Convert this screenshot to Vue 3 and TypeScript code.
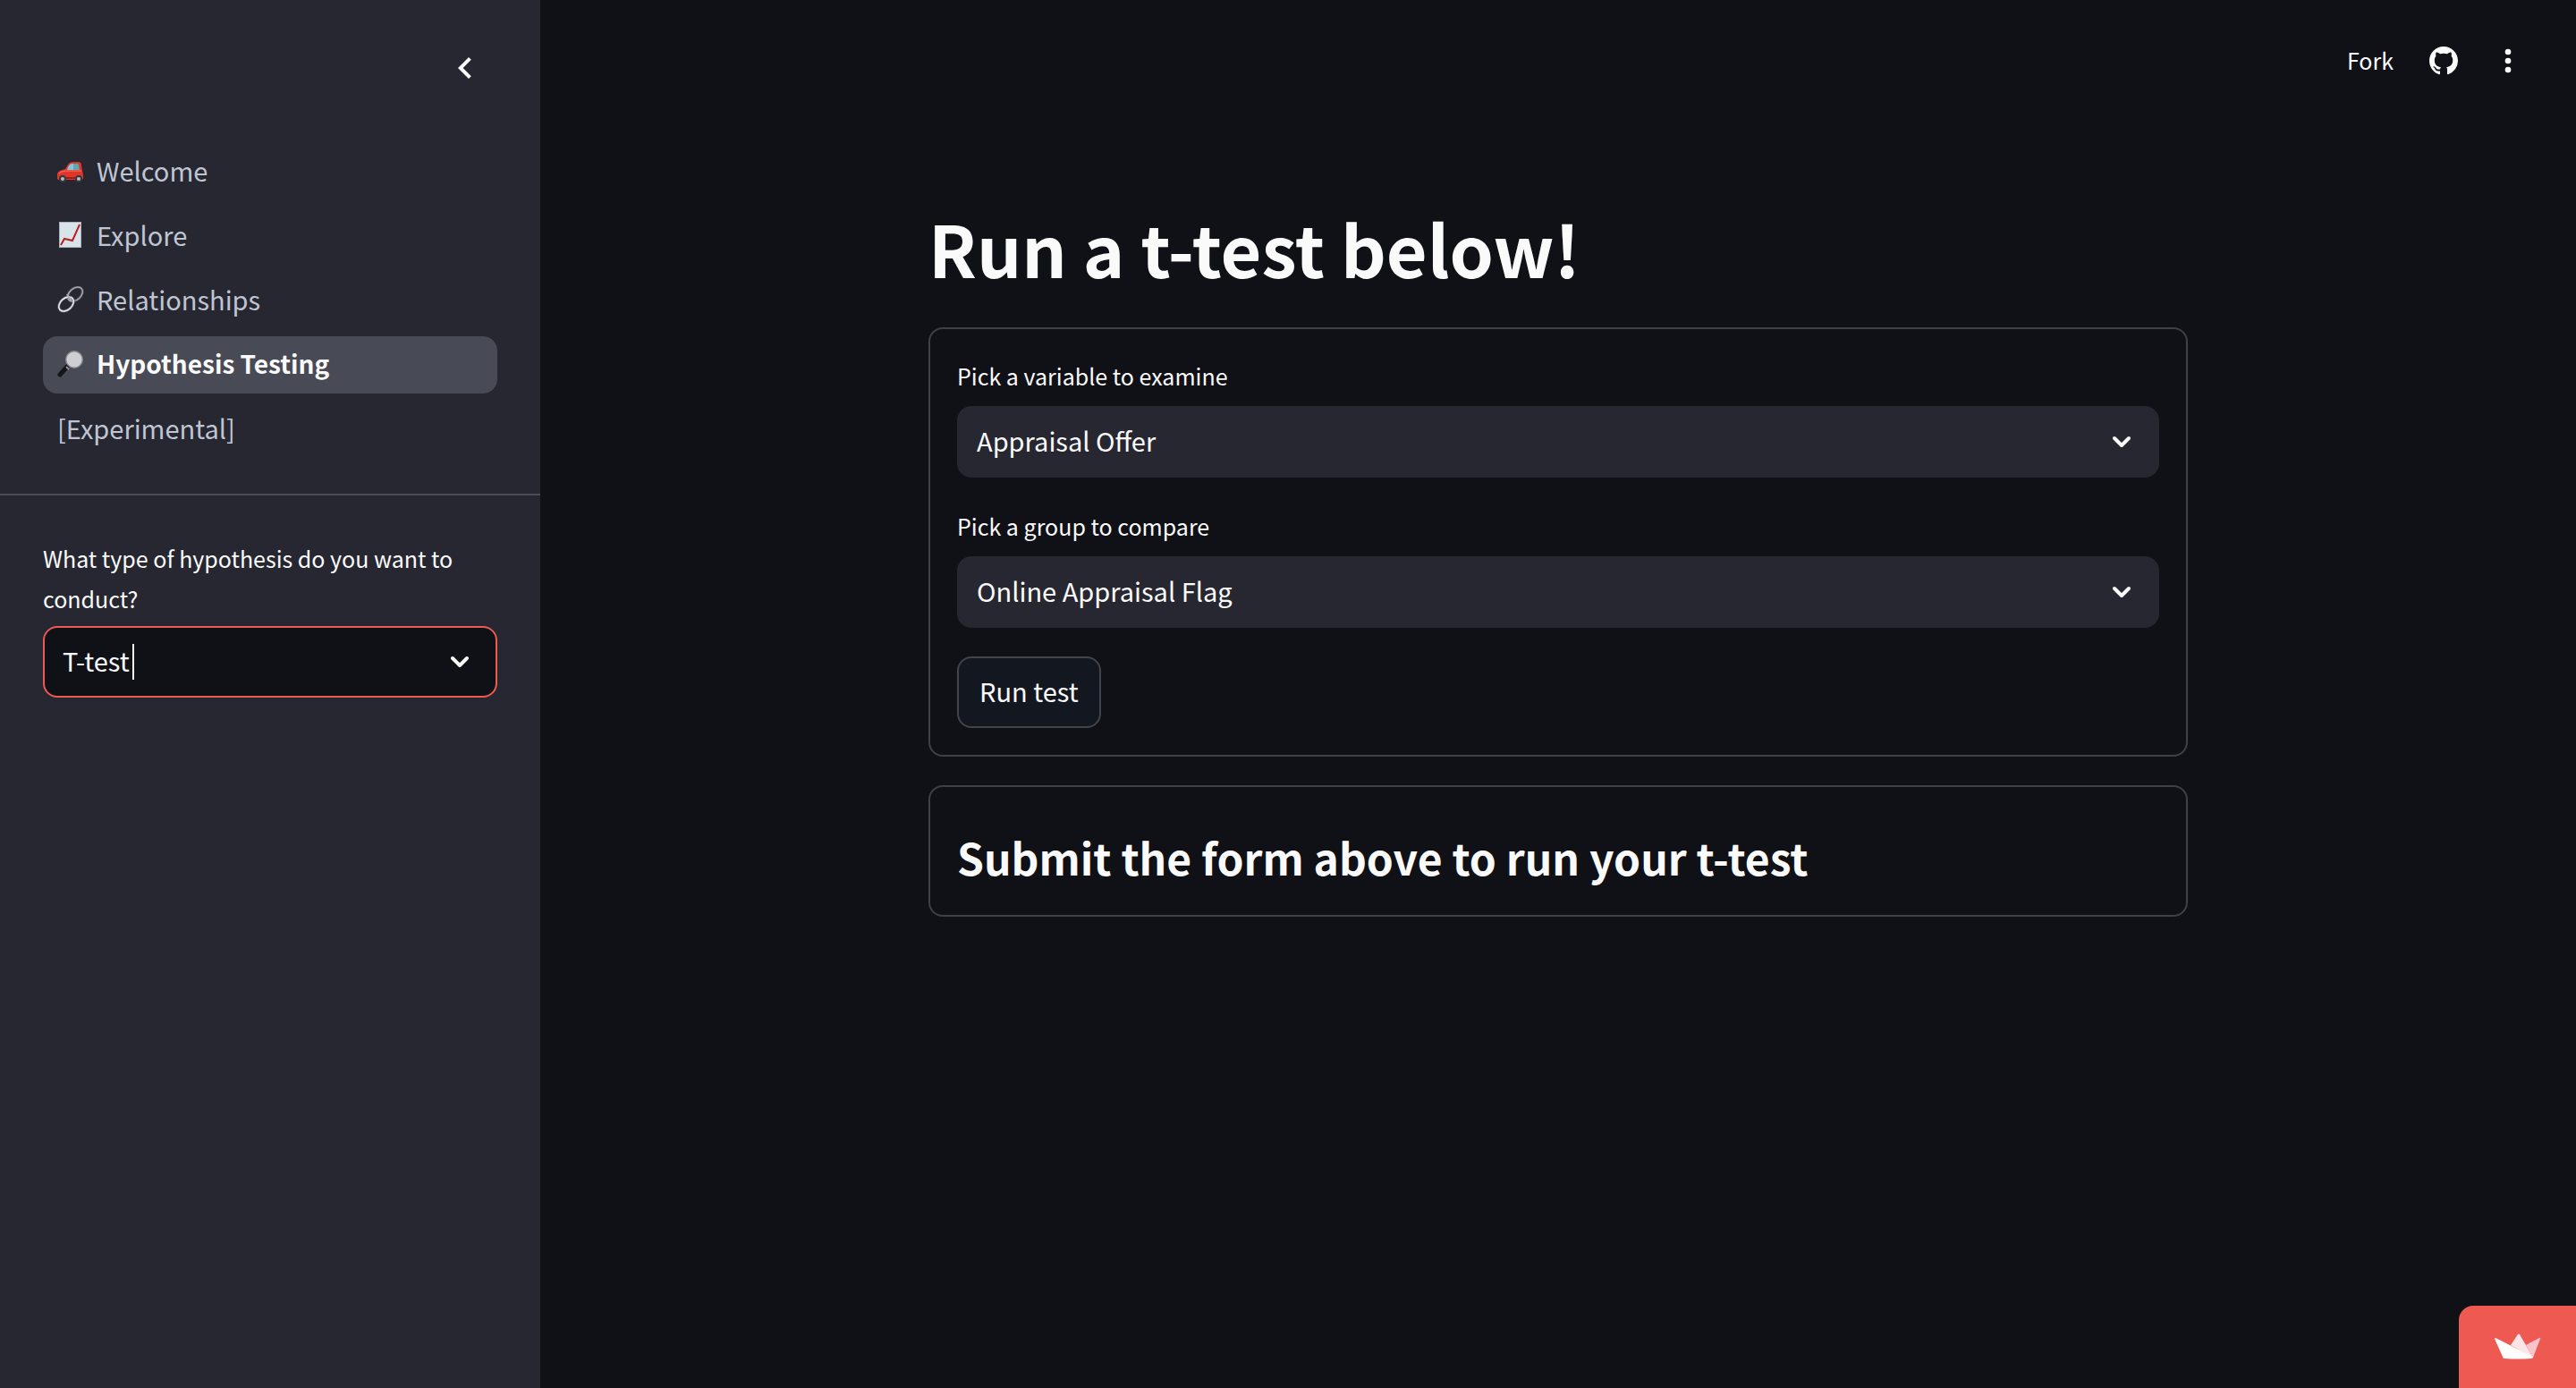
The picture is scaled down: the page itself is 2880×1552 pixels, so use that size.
<script setup lang="ts">
import { ref } from 'vue'

type Icon = 'car' | 'chart' | 'link' | 'lens' | null

interface Page {
  label: string
  icon: Icon
}

const pages: Page[] = [
  { label: 'Welcome', icon: 'car' },
  { label: 'Explore', icon: 'chart' },
  { label: 'Relationships', icon: 'link' },
  { label: 'Hypothesis Testing', icon: 'lens' },
  { label: '[Experimental]', icon: null },
]

const current = ref('Hypothesis Testing')
const hypothesis = ref('T-test')
const variable = ref('Appraisal Offer')
const group = ref('Online Appraisal Flag')
</script>

<template>
  <div class="app">
    <aside class="sidebar">
      <div class="sidebar-top">
        <button class="icon-button collapse" type="button" aria-label="Close sidebar">
          <svg width="48" height="48" viewBox="0 0 24 24"><path fill="currentColor" d="M15.41 7.41 14 6l-6 6 6 6 1.41-1.41L10.83 12z" /></svg>
        </button>
      </div>
      <nav class="pages">
        <a
          v-for="page in pages"
          :key="page.label"
          href="#"
          class="page"
          :class="{ active: page.label === current }"
          @click.prevent="current = page.label"
        >
          <svg v-if="page.icon === 'car'" class="page-icon" viewBox="0 0 30 32">
            <path d="M0 24v-5c0-3 4-5 9-6l3-5c1-2 3-3 6-3h5c3 0 4 1 4 4l1 6c1 3 1 6 1 9l-2 1H1z" fill="#e0352b" />
            <path d="M11 14c1-4 3-7 6-7h1v7z" fill="#86c6d4" />
            <path d="M18 7h5c1 0 1 2 2 7h-7z" fill="#5fa6b8" />
            <path d="M2 18c3-3 8-3 11-3h14" stroke="#ff7765" stroke-width="1" fill="none" />
            <path d="M10 23h10" stroke="#9c1a18" stroke-width="2" />
            <circle cx="6" cy="24" r="4" fill="#37373b" /><circle cx="6" cy="24" r="2" fill="#b9bcc0" />
            <circle cx="24" cy="24" r="4" fill="#37373b" /><circle cx="24" cy="24" r="2" fill="#b9bcc0" />
          </svg>
          <svg v-else-if="page.icon === 'chart'" class="page-icon" viewBox="0 0 30 32">
            <rect x="2" y="0" width="25" height="29" fill="#a9b4bd" />
            <rect x="3" y="1" width="23" height="27" fill="#d9e3ea" />
            <path d="M4 26l4-7 9 2 8-18" fill="none" stroke="#b8211f" stroke-width="2" />
          </svg>
          <svg v-else-if="page.icon === 'link'" class="page-icon" viewBox="0 0 30 32" fill="none">
            <ellipse cx="20" cy="9" rx="9.5" ry="6.5" transform="rotate(-42 20 9)" stroke="#4d4f55" stroke-width="3" />
            <ellipse cx="20" cy="9" rx="9.5" ry="6.5" transform="rotate(-42 20 9)" stroke="#a9adb6" stroke-width="1.4" />
            <ellipse cx="10" cy="20" rx="9.5" ry="6.5" transform="rotate(-42 10 20)" stroke="#5d6066" stroke-width="3" />
            <ellipse cx="10" cy="20" rx="9.5" ry="6.5" transform="rotate(-42 10 20)" stroke="#e6eaee" stroke-width="1.6" />
            <path d="M11 9c1 3 3 5 5 7" stroke="#a9adb6" stroke-width="2" />
          </svg>
          <svg v-else-if="page.icon === 'lens'" class="page-icon" viewBox="0 0 30 32">
            <path d="M3 27l8-9" stroke="#15161a" stroke-width="5" stroke-linecap="round" />
            <path d="M10 18l3 3" stroke="#8f9299" stroke-width="2" />
            <circle cx="19" cy="10" r="10" fill="#8a8c93" />
            <circle cx="19" cy="10" r="8.6" fill="#cfcfd3" />
          </svg>
          <span class="page-label">{{ page.label }}</span>
        </a>
      </nav>
      <div class="sidebar-form">
        <label class="label" for="hypothesis">What type of hypothesis do you want to conduct?</label>
        <div class="select focused">
          <select id="hypothesis" v-model="hypothesis">
            <option>T-test</option>
          </select>
          <span class="value" aria-hidden="true"><span class="ghost">{{ hypothesis }}</span><i class="caret"></i></span>
          <svg class="chevron" viewBox="0 0 24 14"><path d="M4 3l8 8 8-8" /></svg>
        </div>
      </div>
    </aside>

    <main class="main">
      <header class="toolbar">
        <a class="fork" href="#">Fork</a>
        <a class="github" href="#" aria-label="View source on GitHub">
          <svg width="32" height="32" viewBox="0 0 16 16"><path fill="currentColor" d="M8 0C3.58 0 0 3.58 0 8c0 3.54 2.29 6.53 5.47 7.59.4.07.55-.17.55-.38 0-.19-.01-.82-.01-1.49-2.01.37-2.53-.49-2.69-.94-.09-.23-.48-.94-.82-1.13-.28-.15-.68-.52-.01-.53.63-.01 1.08.58 1.23.82.72 1.21 1.87.87 2.33.66.07-.52.28-.87.51-1.07-1.78-.2-3.64-.89-3.64-3.95 0-.87.31-1.59.82-2.15-.08-.2-.36-1.02.08-2.12 0 0 .67-.21 2.2.82.64-.18 1.32-.27 2-.27s1.36.09 2 .27c1.53-1.04 2.2-.82 2.2-.82.44 1.1.16 1.92.08 2.12.51.56.82 1.27.82 2.15 0 3.07-1.87 3.75-3.65 3.95.29.25.54.73.54 1.48 0 1.07-.01 1.93-.01 2.2 0 .21.15.46.55.38A8.01 8.01 0 0 0 16 8c0-4.42-3.58-8-8-8z" /></svg>
        </a>
        <button class="icon-button" type="button" aria-label="Main menu">
          <svg width="40" height="40" viewBox="0 0 24 24" fill="currentColor"><circle cx="12" cy="6" r="2" /><circle cx="12" cy="12" r="2" /><circle cx="12" cy="18" r="2" /></svg>
        </button>
      </header>

      <div class="content">
        <h1>Run a t-test below!</h1>
        <form class="card" @submit.prevent>
          <div class="field">
            <label class="label" for="variable">Pick a variable to examine</label>
            <div class="select">
              <select id="variable" v-model="variable">
                <option>Appraisal Offer</option>
              </select>
              <svg class="chevron" viewBox="0 0 24 14"><path d="M4 3l8 8 8-8" /></svg>
            </div>
          </div>
          <div class="field">
            <label class="label" for="group">Pick a group to compare</label>
            <div class="select">
              <select id="group" v-model="group">
                <option>Online Appraisal Flag</option>
              </select>
              <svg class="chevron" viewBox="0 0 24 14"><path d="M4 3l8 8 8-8" /></svg>
            </div>
          </div>
          <button class="run" type="submit">Run test</button>
        </form>
        <section class="card">
          <h2>Submit the form above to run your t-test</h2>
        </section>
      </div>
    </main>

    <a class="badge" href="#" aria-label="Hosted with Streamlit">
      <svg width="52" height="30" viewBox="0 0 52 30">
        <path d="M18 13 26 1q1-1 2 0l15 26z" fill="#fde4e8" />
        <path d="M35 13 50 5q2-1 1 1l-8 21z" fill="#f8c3cb" />
        <path d="M1 5 43 26q0 2-2 2-15 1-30 0-2 0-2-2L0 6q0-1 1-1z" fill="#fffefd" />
      </svg>
    </a>
  </div>
</template>

<style>
body {
  margin: 0;
  background: #101116;
}
</style>

<style scoped>
.app {
  display: flex;
  min-height: 100vh;
  color: #fafafa;
  background: #101116;
  font-family: "Noto Sans CJK SC", "Noto Sans", sans-serif;
  font-size: 29px;
}

.app * {
  box-sizing: border-box;
}

a {
  color: inherit;
  text-decoration: none;
}

svg {
  display: block;
}

.sidebar {
  flex: none;
  width: 604px;
  background: #262730;
}

.sidebar-top {
  display: flex;
  justify-content: flex-end;
  padding: 52px 60px 60px;
}

.icon-button {
  width: 40px;
  height: 40px;
  padding: 0;
  border: 0;
  color: inherit;
  background: none;
}

.icon-button.collapse {
  width: 48px;
  height: 48px;
}

.pages {
  display: flex;
  flex-direction: column;
  gap: 8px;
  padding: 0 48px 40px;
  border-bottom: 2px solid #4b4d55;
}

.page {
  display: flex;
  align-items: center;
  gap: 14px;
  height: 64px;
  padding: 0 16px;
  border-radius: 16px;
  color: #bfc5d3;
}

.page.active {
  color: #fafafa;
  background: #484a55;
  font-size: 28px;
  font-weight: 700;
}

.page-icon {
  width: 30px;
  height: 32px;
}

.page-label {
  padding-bottom: 4px;
}

.sidebar-form {
  padding: 48px;
}

.label {
  display: block;
  min-height: 48px;
  margin-bottom: 8px;
  font-size: 25px;
  line-height: 45px;
}

.select {
  display: grid;
  align-items: center;
  height: 80px;
  border: 2px solid #262730;
  border-radius: 16px;
  background: #262730;
}

.select > * {
  grid-area: 1 / 1;
}

.select.focused {
  border-color: #ee5a52;
  background: #101116;
}

.select select {
  width: 100%;
  height: 100%;
  padding: 0 20px 4px;
  border: 0;
  border-radius: 16px;
  outline: 0;
  appearance: none;
  color: inherit;
  background: none;
  font: inherit;
}

.value {
  display: flex;
  align-items: center;
  gap: 3px;
  padding-left: 20px;
  pointer-events: none;
}

.ghost {
  visibility: hidden;
}

.caret {
  width: 2px;
  height: 40px;
  background: #fafafa;
}

.chevron {
  justify-self: end;
  width: 24px;
  height: 14px;
  margin-right: 28px;
  fill: none;
  stroke: #fafafa;
  stroke-width: 4;
  stroke-linecap: round;
  stroke-linejoin: round;
  pointer-events: none;
}

.main {
  flex: 1;
}

.toolbar {
  display: flex;
  align-items: center;
  justify-content: flex-end;
  height: 136px;
  padding: 0 56px;
  font-size: 25px;
}

.fork {
  padding-bottom: 2px;
}

.github {
  margin: 0 36px 0 40px;
}

.content {
  display: flex;
  flex-direction: column;
  gap: 32px;
  max-width: 1408px;
  margin: 0 auto;
  padding: 88px 0;
}

h1,
h2 {
  margin: 0;
  font-weight: 700;
}

h1 {
  padding-bottom: 4px;
  font-size: 79px;
  line-height: 106px;
}

h2 {
  padding: 22px 0 9px;
  font-size: 48px;
  line-height: 52px;
}

.card {
  display: flex;
  flex-direction: column;
  gap: 32px;
  padding: 30px;
  border: 2px solid #404146;
  border-radius: 16px;
}

.run {
  align-self: flex-start;
  height: 80px;
  padding: 0 23px 4px;
  border: 2px solid #42444c;
  border-radius: 16px;
  color: inherit;
  background: #131720;
  font: inherit;
}

.badge {
  position: fixed;
  right: 0;
  bottom: 0;
  display: flex;
  align-items: center;
  justify-content: center;
  width: 131px;
  height: 92px;
  border-top-left-radius: 16px;
  background: #ee5a52;
}
</style>
